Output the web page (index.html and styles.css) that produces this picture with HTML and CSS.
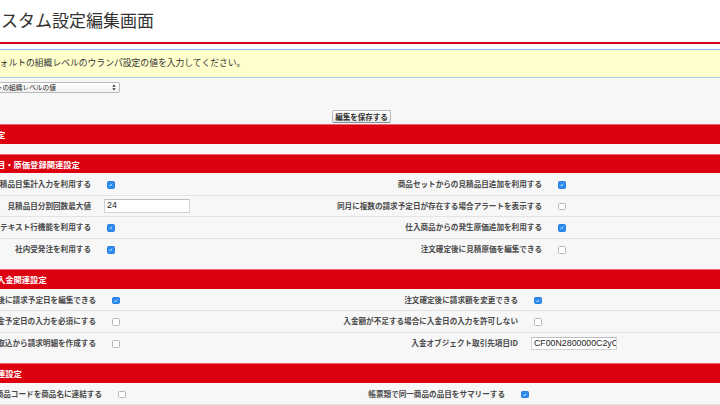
FILE: index.html
```html
<!DOCTYPE html>
<html lang="ja">
<head>
  <meta charset="UTF-8">
  <title>カスタム設定編集画面</title>
  <link rel="stylesheet" href="styles.css">
</head>
<body>
<div class="page">

  <div class="top">
    <h1>カスタム設定編集画面</h1>
    <div class="msg">デフォルトの組織レベルのウランパ設定の値を入力してください。</div>
  </div>

  <div class="org-select">
    <span>デフォルトの組織レベルの値</span>
    <svg width="4" height="7" viewBox="0 0 4 7"><path d="M0.3 2.8 L2 0.6 L3.7 2.8 Z M0.3 4.2 L2 6.4 L3.7 4.2 Z" fill="#333"/></svg>
  </div>

  <div class="btn-row"><button class="btn">編集を保存する</button></div>

  <!-- 基本設定 -->
  <div class="sec">
    <div class="sec-head">基本設定</div>
    <div class="sec-body"></div>
  </div>

  <!-- 見積品目・原価 -->
  <div class="sec">
    <div class="sec-head">見積品目・原価登録関連設定</div>
    <div class="sec-body s2">
      <div class="row">
        <div class="lbl">見積品目集計入力を利用する</div>
        <div class="val"><span class="cb on"><svg viewBox="0 0 8 8"><path d="M2 4.2 L3.4 5.6 L6 2.6"/></svg></span></div>
        <div class="lbl">商品セットからの見積品目追加を利用する</div>
        <div class="val"><span class="cb on"><svg viewBox="0 0 8 8"><path d="M2 4.2 L3.4 5.6 L6 2.6"/></svg></span></div>
      </div>
      <div class="row">
        <div class="lbl">見積品目分割回数最大値</div>
        <div class="val"><div class="txt">24</div></div>
        <div class="lbl">同月に複数の請求予定日が存在する場合アラートを表示する</div>
        <div class="val"><span class="cb"></span></div>
      </div>
      <div class="row">
        <div class="lbl">見積テキスト行機能を利用する</div>
        <div class="val"><span class="cb on"><svg viewBox="0 0 8 8"><path d="M2 4.2 L3.4 5.6 L6 2.6"/></svg></span></div>
        <div class="lbl">仕入商品からの発生原価追加を利用する</div>
        <div class="val"><span class="cb on"><svg viewBox="0 0 8 8"><path d="M2 4.2 L3.4 5.6 L6 2.6"/></svg></span></div>
      </div>
      <div class="row">
        <div class="lbl">社内受発注を利用する</div>
        <div class="val"><span class="cb on"><svg viewBox="0 0 8 8"><path d="M2 4.2 L3.4 5.6 L6 2.6"/></svg></span></div>
        <div class="lbl">注文確定後に見積原価を編集できる</div>
        <div class="val"><span class="cb"></span></div>
      </div>
    </div>
  </div>

  <!-- 請求・入金 -->
  <div class="sec">
    <div class="sec-head">請求・入金関連設定</div>
    <div class="sec-body s3">
      <div class="row">
        <div class="lbl">注文確定後に請求予定日を編集できる</div>
        <div class="val"><span class="cb on"><svg viewBox="0 0 8 8"><path d="M2 4.2 L3.4 5.6 L6 2.6"/></svg></span></div>
        <div class="lbl">注文確定後に請求額を変更できる</div>
        <div class="val"><span class="cb on"><svg viewBox="0 0 8 8"><path d="M2 4.2 L3.4 5.6 L6 2.6"/></svg></span></div>
      </div>
      <div class="row">
        <div class="lbl">入金予定日の入力を必須にする</div>
        <div class="val"><span class="cb"></span></div>
        <div class="lbl">入金額が不足する場合に入金日の入力を許可しない</div>
        <div class="val"><span class="cb"></span></div>
      </div>
      <div class="row">
        <div class="lbl">入金取込から請求明細を作成する</div>
        <div class="val"><span class="cb"></span></div>
        <div class="lbl">入金オブジェクト取引先項目ID</div>
        <div class="val"><div class="txt">CF00N2800000C2yCE</div></div>
      </div>
    </div>
  </div>

  <!-- 帳票 -->
  <div class="sec">
    <div class="sec-head">帳票関連設定</div>
    <div class="sec-body s4">
      <div class="row">
        <div class="lbl">商品コードを商品名に連結する</div>
        <div class="val"><span class="cb"></span></div>
        <div class="lbl">帳票類で同一商品の品目をサマリーする</div>
        <div class="val"><span class="cb on"><svg viewBox="0 0 8 8"><path d="M2 4.2 L3.4 5.6 L6 2.6"/></svg></span></div>
      </div>
      <div class="row">
        <div class="lbl">見積書に社印を表示する</div>
        <div class="val"><span class="cb"></span></div>
        <div class="lbl">請求書に社印を表示する</div>
        <div class="val"><span class="cb"></span></div>
      </div>
    </div>
  </div>

</div>
</body>
</html>
```

FILE: styles.css
```css
body {
  margin: 0;
  background-color: #f7f7f7;
  font-family: "Noto Sans CJK JP", "Noto Sans", sans-serif;
  color: #333;
  overflow: hidden;
}

/* the page is scrolled a little to the right */
.page {
  margin-left: -40px;
  width: 803px;
}

.top {
  background-color: #fff;
  padding-bottom: 0.5px;
}

h1 {
  margin: 0;
  height: 44px;
  box-sizing: border-box;
  padding-left: 24px;
  font-size: 17px;
  line-height: 39px;
  font-weight: normal;
  color: #333;
  border-bottom: 2px solid #d8001b;
}

.msg {
  margin-top: 5px;
  height: 29px;
  box-sizing: border-box;
  border-top: 1px solid #86c1ee;
  border-bottom: 1px solid #a3d1f3;
  background-color: #ffffcc;
  padding-left: 22px;
  font-size: 8.8px;
  line-height: 26px;
}

.org-select {
  margin: 3px 0 0 4px;
  width: 156px;
  height: 11px;
  box-sizing: border-box;
  border: 1px solid #b9b9b9;
  border-radius: 2px;
  background: linear-gradient(#fff, #f1f1f1);
  display: flex;
  align-items: center;
  justify-content: space-between;
  padding: 0 3px 0 4px;
  font-size: 6.7px;
  color: #222;
}

.btn-row {
  display: flex;
  justify-content: center;
  padding: 17.5px 0 1px;
}

.btn {
  width: 59px;
  height: 13px;
  padding: 0;
  border: 1px solid #b8b8b8;
  border-bottom-color: #8a8a8a;
  border-radius: 2px;
  background: linear-gradient(#fff, #e8e8e8);
  font-family: "Noto Sans CJK JP", sans-serif;
  font-size: 7.5px;
  font-weight: bold;
  color: #333;
  line-height: 11px;
}

.sec-head {
  height: 19.5px;
  box-sizing: border-box;
  border-top: 1px solid #e9646d;
  background-color: #dd0011;
  color: #fff;
  font-weight: bold;
  font-size: 8.3px;
  line-height: 18px;
  padding-left: 12px;
}

.sec-body {
  padding: 1px 0 9px;
}

.row {
  display: grid;
  height: 21.5px;
  box-sizing: border-box;
  border-bottom: 1px solid #e3e3e3;
}

.row:last-child {
  border-bottom: none;
}

.s2 .row { grid-template-columns: 137px 225px 226px 215px; }
.s3 .row { grid-template-columns: 142px 211px 211px 239px; }
.s4 .row { grid-template-columns: 148px 201px 202px 252px; }

.lbl {
  text-align: right;
  padding-right: 6px;
  font-size: 7.6px;
  font-weight: bold;
  color: #4a4a4a;
  white-space: nowrap;
  line-height: 20px;
}

.val {
  padding-left: 7px;
  display: flex;
  align-items: center;
}

.cb {
  width: 7.5px;
  height: 7.5px;
  box-sizing: border-box;
  margin: 1px 0 0 3px;
  border: 1px solid #b8b8b8;
  border-radius: 1.5px;
  background-color: #fff;
  display: flex;
}

.cb.on {
  background-color: #2d8cf2;
  border-color: #2a7fe0;
}

.cb svg {
  width: 100%;
  height: 100%;
}

.cb path {
  fill: none;
  stroke: #fff;
  stroke-width: 1.1;
}

.txt {
  width: 86px;
  height: 13.5px;
  box-sizing: border-box;
  border: 1px solid #d2d2d2;
  border-top-color: #bdbdbd;
  background-color: #fff;
  padding-left: 2px;
  font-family: "Liberation Sans", Arial, sans-serif;
  font-size: 8.8px;
  line-height: 11.5px;
  color: #222;
  white-space: nowrap;
  overflow: hidden;
}
```
